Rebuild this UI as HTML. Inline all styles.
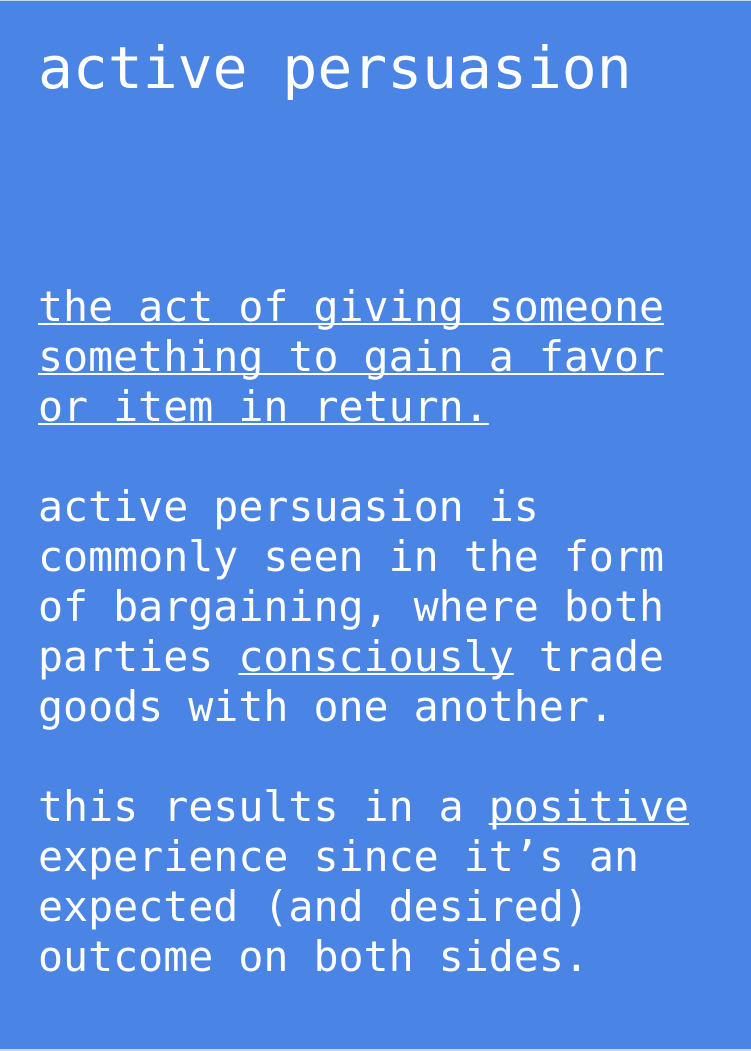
<!DOCTYPE html>
<html><head><meta charset="utf-8"><style>
html,body{margin:0;padding:0;}
body{width:751px;height:1051px;background:#4a84e4;position:relative;overflow:hidden;font-family:"DejaVu Sans Mono","Liberation Mono",monospace;color:#fff;}
.top{position:absolute;left:0;top:0;width:751px;height:1px;background:#c8d6ee;}
.bot{position:absolute;left:0;bottom:0;width:751px;height:2px;background:#c8d6ee;}
h1{position:absolute;left:38px;top:39px;margin:0;font-weight:normal;font-size:58px;line-height:58px;white-space:pre;}
.b{position:absolute;left:38px;top:282px;font-size:41.6px;line-height:50px;white-space:pre;}
u{text-decoration:underline;text-decoration-thickness:2px;text-underline-offset:2px;text-decoration-skip-ink:none;}
</style></head><body>
<div class="top"></div><div class="bot"></div>
<h1>active persuasion</h1>
<div class="b"><u>the act of giving someone</u>
<u>something to gain a favor</u>
<u>or item in return.</u>

active persuasion is
commonly seen in the form
of bargaining, where both
parties <u>consciously</u> trade
goods with one another.

this results in a <u>positive</u>
experience since it’s an
expected (and desired)
outcome on both sides.</div>
</body></html>
